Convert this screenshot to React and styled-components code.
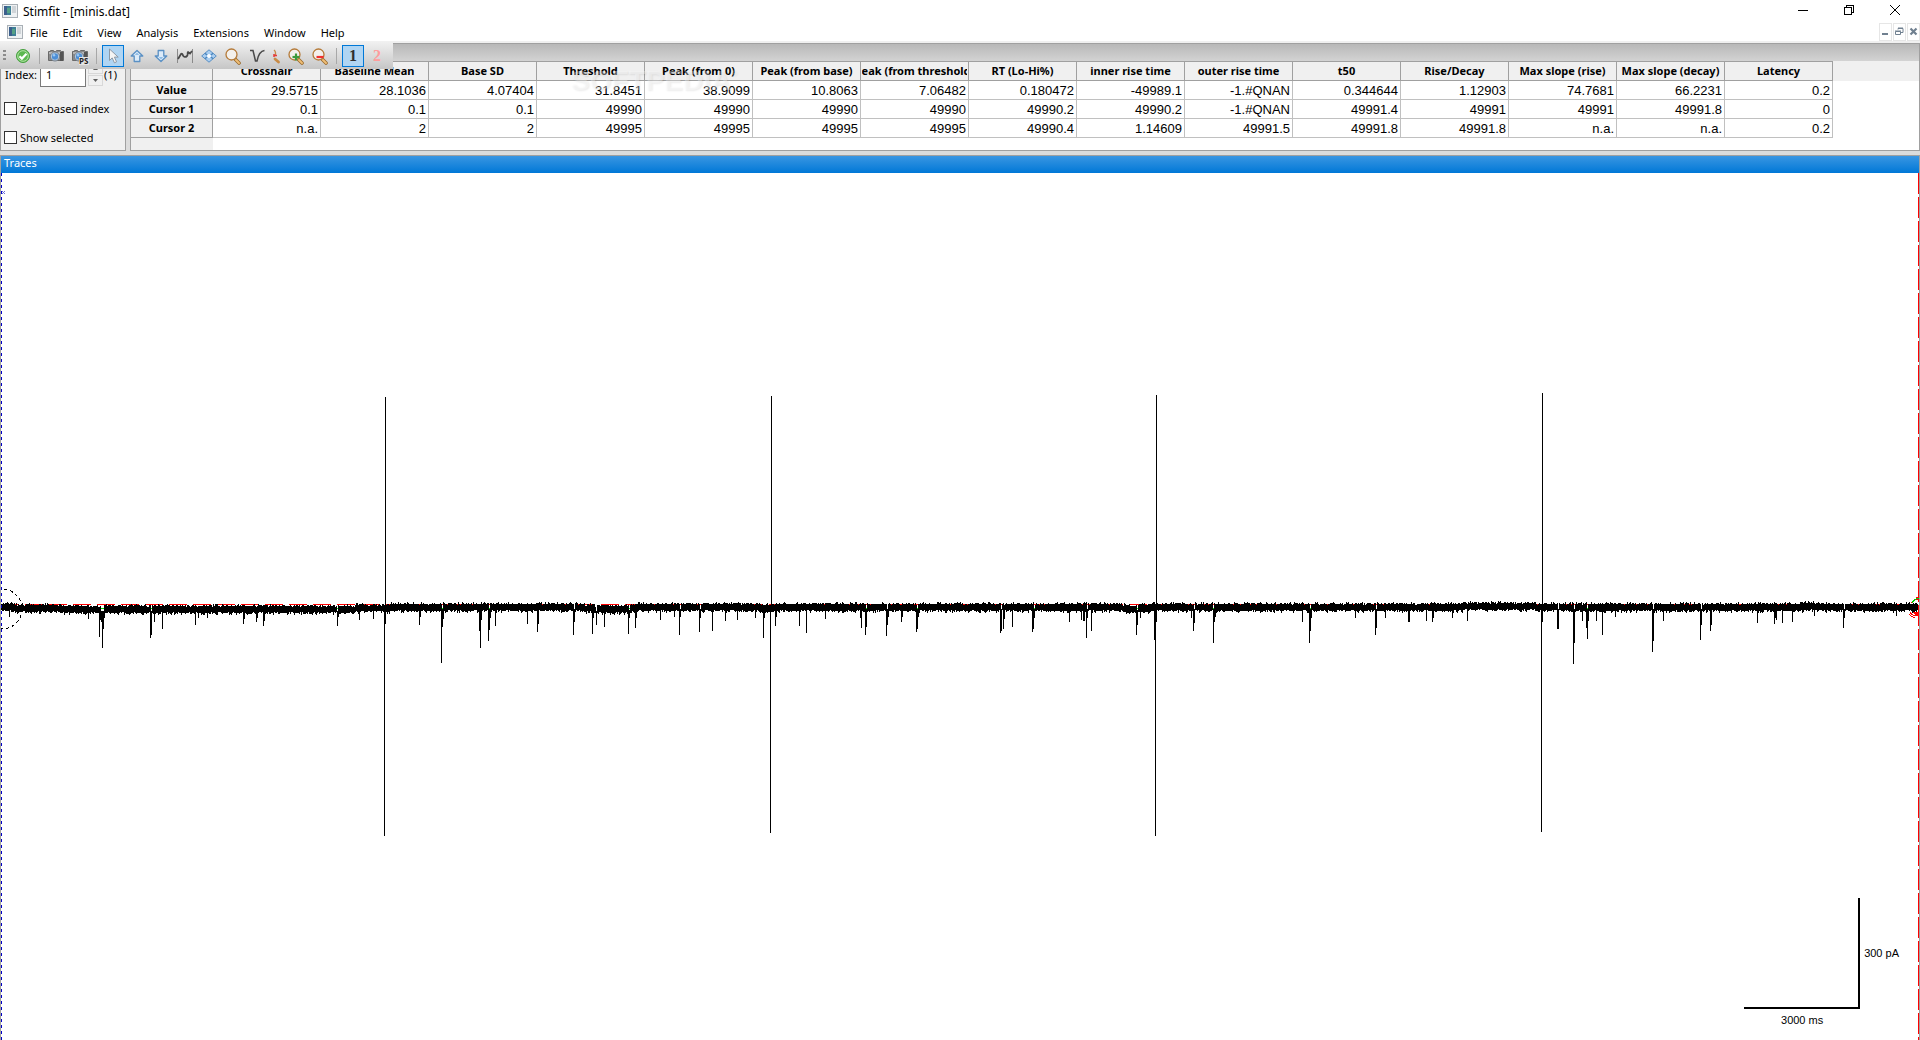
import styled, { createGlobalStyle } from 'styled-components';

const columns = [
    { title: 'Crosshair', values: ['29.5715', '0.1', 'n.a.'] },
    { title: 'Baseline Mean', values: ['28.1036', '0.1', '2'] },
    { title: 'Base SD', values: ['4.07404', '0.1', '2'] },
    { title: 'Threshold', values: ['31.8451', '49990', '49995'] },
    { title: 'Peak (from 0)', values: ['38.9099', '49990', '49995'] },
    { title: 'Peak (from base)', values: ['10.8063', '49990', '49995'] },
    { title: 'Peak (from threshold)', values: ['7.06482', '49990', '49995'] },
    { title: 'RT (Lo-Hi%)', values: ['0.180472', '49990.2', '49990.4'] },
    { title: 'inner rise time', values: ['-49989.1', '49990.2', '1.14609'] },
    { title: 'outer rise time', values: ['-1.#QNAN', '-1.#QNAN', '49991.5'] },
    { title: 't50', values: ['0.344644', '49991.4', '49991.8'] },
    { title: 'Rise/Decay', values: ['1.12903', '49991', '49991.8'] },
    { title: 'Max slope (rise)', values: ['74.7681', '49991', 'n.a.'] },
    { title: 'Max slope (decay)', values: ['66.2231', '49991.8', 'n.a.'] },
    { title: 'Latency', values: ['0.2', '0', '0.2'] },
];
const rowNames = ['Value', 'Cursor 1', 'Cursor 2'];
const menus = ['File', 'Edit', 'View', 'Analysis', 'Extensions', 'Window', 'Help'];

// upper edge of the noise band along the recording
const baseline = [
    [0, 604], [30, 605], [90, 606], [330, 606], [380, 605], [400, 604], [500, 604],
    [580, 604], [600, 606], [625, 606], [640, 604], [755, 604], [765, 605], [775, 604],
    [1120, 604], [1128, 606], [1145, 605], [1158, 604], [1450, 604], [1475, 603],
    [1525, 603], [1545, 604], [1795, 604], [1810, 603], [1830, 604], [1920, 604],
];

// downward events: [x, lowest point]
const events = [
    [9, 617], [88, 619], [99, 637], [100, 620], [101, 622], [102, 648], [103, 629], [104, 618],
    [150, 638], [151, 635], [154, 622], [162, 629], [195, 625], [198, 618], [207, 618],
    [243, 624], [244, 619], [256, 622], [257, 618], [263, 626], [264, 621], [337, 626],
    [338, 617], [359, 620], [373, 619], [385, 624], [419, 625], [420, 617], [441, 663],
    [442, 627], [443, 619], [479, 631], [480, 648], [481, 620], [488, 641], [489, 630],
    [490, 618], [495, 626], [527, 624], [537, 632], [538, 624], [573, 635], [574, 622],
    [592, 634], [593, 618], [596, 625], [604, 627], [628, 634], [629, 618], [635, 628],
    [636, 618], [660, 620], [674, 617], [679, 635], [680, 617], [699, 632], [700, 618],
    [712, 631], [725, 621], [737, 620], [755, 618], [763, 638], [764, 618], [775, 626],
    [776, 617], [799, 626], [806, 633], [825, 619], [860, 618], [861, 628], [865, 635],
    [866, 627], [886, 636], [887, 625], [888, 617], [901, 622], [902, 617], [916, 632],
    [917, 629], [918, 617], [1000, 633], [1001, 631], [1003, 629], [1004, 619], [1012, 627],
    [1032, 632], [1033, 629], [1034, 618], [1069, 622], [1081, 620], [1083, 621], [1084, 621],
    [1086, 638], [1087, 618], [1091, 631], [1136, 635], [1137, 625], [1140, 618], [1154, 640],
    [1156, 622], [1191, 618], [1193, 631], [1194, 623], [1213, 643], [1214, 622], [1215, 617],
    [1302, 622], [1309, 643], [1310, 631], [1311, 618], [1355, 618], [1375, 635], [1376, 628],
    [1385, 618], [1408, 622], [1409, 622], [1426, 621], [1432, 622], [1433, 618], [1452, 618],
    [1467, 621], [1542, 622], [1557, 629], [1558, 629], [1573, 664], [1574, 643], [1582, 621],
    [1586, 628], [1587, 639], [1588, 621], [1596, 621], [1602, 635], [1615, 617], [1652, 652],
    [1653, 641], [1663, 621], [1700, 640], [1701, 625], [1710, 631], [1711, 625], [1757, 623],
    [1774, 624], [1775, 618], [1776, 620], [1782, 623], [1792, 622], [1814, 616], [1843, 628],
    [1844, 618], [1896, 616],
];

// gaps in the upper edge right after the larger events
const notches = [
    101, 102, 103, 151, 337, 442, 489, 574, 596, 629, 680, 700, 866, 887, 917, 1001, 1034,
    1087, 1137, 1194, 1213, 1310, 1376, 1558, 1574, 1587, 1653, 1701, 1844,
];

const artifacts = [
    { x: 384, top: 397, bottom: 836 },
    { x: 770, top: 396, bottom: 833 },
    { x: 1155, top: 395, bottom: 836 },
    { x: 1541, top: 393, bottom: 832 },
];

const levelAt = (x) => {
    const i = baseline.findIndex(([px]) => px > x);
    if (i < 1) return baseline[baseline.length - 1][1];
    const [x0, y0] = baseline[i - 1];
    const [x1, y1] = baseline[i];
    return y0 + ((y1 - y0) * (x - x0)) / (x1 - x0);
};

const buildTrace = () => {
    let seed = 4711;
    const random = () => {
        seed = (seed * 1103515245 + 12345) % 2147483648;
        return seed / 2147483648;
    };
    const lows = new Map(events);
    let path = '';
    for (let x = 1; x < 1918; x += 1) {
        const level = Math.round(levelAt(x));
        const up = random();
        const down = random();
        let top = level + (up < 0.08 ? -2 : up < 0.45 ? -1 : up < 0.93 ? 0 : 1);
        let bottom = level + 7 + (down < 0.2 ? -1 : down < 0.7 ? 0 : down < 0.93 ? 1 : 2);
        if (notches.includes(x)) top = level + 5;
        if (lows.has(x)) bottom = lows.get(x);
        path += `M${x + 0.5} ${top}V${bottom}`;
    }
    return path;
};
const tracePath = buildTrace();

const AppIcon = () => (
    <svg width="16" height="14" viewBox="0 0 16 14" shapeRendering="crispEdges">
        <rect x="0" y="0" width="16" height="14" fill="#a9b0b6" />
        <rect x="1" y="1" width="14" height="12" fill="#eef1f3" />
        <rect x="2" y="2" width="7" height="9" fill="#3d7f96" />
        <rect x="2" y="2" width="3" height="9" fill="#3c5f8c" />
        <rect x="5" y="4" width="3" height="5" fill="#55a186" />
        <rect x="10" y="2" width="4" height="7" fill="#cfd4d8" />
    </svg>
);

const CheckIcon = () => (
    <svg width="16" height="16" viewBox="0 0 16 16">
        <circle cx="8" cy="8" r="6.5" fill="#5cb850" stroke="#46a03f" />
        <circle cx="8" cy="8" r="5.3" fill="none" stroke="#b4e2a8" />
        <path d="M4.5 8.200l2.400 2.400 4.600-4.800" fill="none" stroke="#fff" strokeWidth="2.200" />
    </svg>
);

const CameraIcon = ({ ps }) => (
    <svg width="18" height="18" viewBox="0 0 18 18">
        <path d="M1.5 4.5h2v-1h3v1h2l1-1h4l1 1h2v9h-15z" fill="#8b8b8b" stroke="#6a6a6a" />
        <path d="M2 5h14v2H2z" fill="#b5b5b5" />
        <path d="M13 5h3v9h-3z" fill="#555" />
        <circle cx="8" cy="9.5" r="4.5" fill="#c7d5e4" stroke="#6f7b88" />
        <circle cx="8" cy="9.5" r="3.2" fill="#4d8fd6" />
        <circle cx="7" cy="8.3" r="1.2" fill="#9cc8f2" />
        {ps && (
            <g>
                <rect x="8" y="10" width="10" height="8" fill="#e4e4e4" />
                <text x="8" y="17" fontSize="8" fontWeight="700" fontFamily="'Noto Sans', sans-serif" fill="#222">
                    PS
                </text>
            </g>
        )}
    </svg>
);

const PointerIcon = () => (
    <svg width="16" height="18" viewBox="0 0 16 18">
        <path
            d="M4.5 2v11.5l2.7-2.6 2.2 4.9 2.2-1-2.2-4.700h3.8z"
            fill="#f4f4f4"
            stroke="#8d99a6"
            strokeLinejoin="round"
        />
    </svg>
);

const ArrowIcon = ({ down }) => (
    <svg width="16" height="16" viewBox="0 0 16 16">
        <path
            d={
                down
                    ? 'M8 13.500L2.200 8h3V2.500h5.600V8h3z'
                    : 'M8 2.500L2.200 8h3v5.500h5.600V8h3z'
            }
            fill="#dcebf9"
            stroke="#5a90c4"
            strokeWidth="1.300"
            strokeLinejoin="round"
        />
        <path d={down ? 'M8 11.500L5.800 9h4.400z' : 'M8 4.500L5.800 7h4.400z'} fill="#8fbde6" />
    </svg>
);

const CurveIcon = () => (
    <svg width="18" height="16" viewBox="0 0 18 16" fill="none" stroke="#4a4a4a">
        <path d="M1.500 1v14M16.500 1v14" stroke="#8a8a8a" />
        <path d="M2 11l3-5c1-1 1.500 0 2 1.500s2.500 2 4 .5 0-3.500 1-4l2 1.500 2-2.500" strokeWidth="1.800" />
    </svg>
);

const FitIcon = () => (
    <svg width="16" height="14" viewBox="0 0 16 14">
        <path d="M8 .8L15.300 7 8 13.200.7 7z" fill="#a9cdf0" stroke="#5a90c4" />
        <path d="M4 4.200l2 1.800M12 4.200L10 6M4 9.800L6 8M12 9.800L10 8" stroke="#4c86bd" strokeWidth="1.400" />
        <path d="M6 7h4M8 5v4" stroke="#fff" strokeWidth="1.600" />
    </svg>
);

const ZoomIcon = ({ sign }) => (
    <svg width="18" height="18" viewBox="0 0 18 18">
        <path d="M11.500 12.500l3.500 3.500" stroke="#9a6a2c" strokeWidth="3.600" strokeLinecap="round" />
        <path d="M12 13l3 3" stroke="#efbe77" strokeWidth="2" strokeLinecap="round" />
        <circle cx="7.500" cy="7.500" r="5.500" fill="#f3f0ec" stroke="#b57a38" strokeWidth="1.300" />
        {sign && <path d="M5.500 10h7" stroke={sign === '+' ? '#3c9a3c' : '#f03030'} strokeWidth="2.200" />}
        {sign === '+' && <path d="M9 6.500v7" stroke="#3c9a3c" strokeWidth="2.200" />}
    </svg>
);

const ValleyIcon = () => (
    <svg width="16" height="16" viewBox="0 0 16 16" fill="none" stroke="#4a4a4a">
        <path d="M1 2.500h3l2.500 10.500h1.500C9 8 10.500 3 15.500 2.500" strokeWidth="1.500" />
    </svg>
);

const HalfZoomIcon = () => (
    <svg width="8" height="16" viewBox="0 0 8 16" fill="none">
        <path d="M1 2q2.500 2 1 6" stroke="#c88b4a" strokeWidth="1.300" />
        <path d="M1 7.500h3M1 6v3" stroke="#e53a3a" strokeWidth="1.500" />
        <path d="M2 11l3.500 3" stroke="#c98b45" strokeWidth="2.800" strokeLinecap="round" />
    </svg>
);

const tools = [
    { name: 'Apply', icon: <CheckIcon /> },
    { gap: true },
    { name: 'Snapshot', icon: <CameraIcon /> },
    { name: 'Snapshot as PS', icon: <CameraIcon ps /> },
    { gap: true },
    { name: 'Select', icon: <PointerIcon />, active: true },
    { name: 'Previous', icon: <ArrowIcon /> },
    { name: 'Next', icon: <ArrowIcon down /> },
    { name: 'Fit trace', icon: <CurveIcon /> },
    { name: 'Move', icon: <FitIcon /> },
    { name: 'Zoom', icon: <ZoomIcon /> },
    { name: 'Event', icon: <ValleyIcon /> },
    { name: 'Partial zoom', icon: <HalfZoomIcon />, narrow: true },
    { name: 'Zoom in', icon: <ZoomIcon sign="+" /> },
    { name: 'Zoom out', icon: <ZoomIcon sign="-" /> },
    { gap: true },
    { name: 'Channel 1', digit: '1', active: true },
    { name: 'Channel 2', digit: '2' },
];

const TracePlot = () => (
    <Plot viewBox="1 173 1918 867" preserveAspectRatio="none" shapeRendering="crispEdges">
        <path d="M1 604.5H1918" stroke="#ff0000" strokeDasharray="18 6" />
        <path
            d="M100 608.5h4M151 608.5h1M337 608.5h1M442 608.5h1M489 608.5h1M629 608.5h1M866 608.5h1M917 608.5h1M1034 608.5h1M1137 608.5h1M1213 608.5h1M1310 608.5h1M1587 608.5h1"
            stroke="#00e000"
        />
        <path d={tracePath} stroke="#000" />
        {artifacts.map(({ x, top, bottom }) => (
            <path key={x} d={`M${x + 1.5} ${top}V612M${x + 0.5} 606V${bottom}`} stroke="#000" />
        ))}
        <path d="M1.5 173V1040" stroke="#0000c8" strokeDasharray="3 3" />
        <circle cx="2" cy="609" r="20" fill="none" stroke="#000" strokeDasharray="3 3" />
        <path d="M2 191l3 3M5 191l-3 3" stroke="#6a6ad8" />
        <path d="M1918.5 173V1040" stroke="#ff0000" strokeDasharray="21 3" />
        <path d="M1911 603q3-4 8-4M1910 612q2 4 8 4M1909 614q3 4 6 3M1916 597h3" fill="none" stroke="#ff0000" />
        <path d="M1913 612h6v3h-4z" fill="#ff0000" />
        <path d="M1912 603q3-5 7-5" fill="none" stroke="#00d000" />
    </Plot>
);

const App = () => {
    return (
        <Window>
            <GlobalStyle />
            <TitleBar>
                <AppIcon />
                <Title>Stimfit - [minis.dat]</Title>
                <WindowButton aria-label="Minimize">
                    <svg width="10" height="10" viewBox="0 0 10 10" shapeRendering="crispEdges">
                        <path d="M0 5.500h10" stroke="#000" />
                    </svg>
                </WindowButton>
                <WindowButton aria-label="Restore">
                    <svg width="10" height="10" viewBox="0 0 10 10" fill="none" stroke="#000" shapeRendering="crispEdges">
                        <path d="M.5 2.500h7v7h-7zM2.500 2.500v-2h7v7h-2" />
                    </svg>
                </WindowButton>
                <WindowButton aria-label="Close">
                    <svg width="10" height="10" viewBox="0 0 10 10" stroke="#000">
                        <path d="M0 0l10 10M10 0L0 10" />
                    </svg>
                </WindowButton>
            </TitleBar>
            <MenuBar>
                <AppIcon />
                <MenuList>
                    {menus.map((menu) => (
                        <MenuButton key={menu}>{menu}</MenuButton>
                    ))}
                </MenuList>
                <ChildButton aria-label="Minimize document">
                    <svg width="9" height="9" viewBox="0 0 9 9">
                        <path d="M1 7h6" stroke="#708090" strokeWidth="2" />
                    </svg>
                </ChildButton>
                <ChildButton aria-label="Restore document">
                    <svg width="9" height="9" viewBox="0 0 9 9" fill="none" stroke="#708090">
                        <path d="M.5 4.500h5v3h-5zM0 4h6M3 2.500v-1h5v4H6M3 1h5" />
                    </svg>
                </ChildButton>
                <ChildButton aria-label="Close document">
                    <svg width="9" height="9" viewBox="0 0 9 9">
                        <path d="M1.500 1.500l6 6M7.500 1.500l-6 6" stroke="#708090" strokeWidth="2.200" />
                    </svg>
                </ChildButton>
            </MenuBar>
            <Workspace>
                <Toolbar>
                    <Grip />
                    {tools.map((tool, i) =>
                        tool.gap ? (
                            <Separator key={i} />
                        ) : (
                            <ToolButton key={i} aria-label={tool.name} $active={tool.active} $narrow={tool.narrow}>
                                {tool.icon || <Digit $faded={!tool.active}>{tool.digit}</Digit>}
                            </ToolButton>
                        ),
                    )}
                </Toolbar>
                <Panels>
                    <TracePanel>
                        <PanelCaption />
                        <IndexRow>
                            <label htmlFor="trace-index">Index:</label>
                            <IndexInput id="trace-index" defaultValue="1" />
                            <Spinner>
                                <SpinButton aria-label="Increase">
                                    <svg width="5" height="3" viewBox="0 0 5 3">
                                        <path d="M0 3l2.500-3L5 3z" fill="#606060" />
                                    </svg>
                                </SpinButton>
                                <SpinButton aria-label="Decrease">
                                    <svg width="5" height="3" viewBox="0 0 5 3">
                                        <path d="M0 0l2.500 3L5 0z" fill="#606060" />
                                    </svg>
                                </SpinButton>
                            </Spinner>
                            <span>(1)</span>
                        </IndexRow>
                        <CheckLabel>
                            <CheckBox type="checkbox" />
                            Zero-based index
                        </CheckLabel>
                        <CheckLabel>
                            <CheckBox type="checkbox" />
                            Show selected
                        </CheckLabel>
                    </TracePanel>
                    <ResultPanel>
                        <PanelCaption />
                        <Grid>
                            <ResultTable>
                                <colgroup>
                                    <NameCol />
                                    {columns.map(({ title }) => (
                                        <ValueCol key={title} />
                                    ))}
                                </colgroup>
                                <thead>
                                    <tr>
                                        <HeadCell />
                                        {columns.map(({ title }) => (
                                            <HeadCell key={title} scope="col">
                                                <HeadText>{title}</HeadText>
                                            </HeadCell>
                                        ))}
                                    </tr>
                                </thead>
                                <tbody>
                                    {rowNames.map((name, row) => (
                                        <tr key={name}>
                                            <HeadCell scope="row">{name}</HeadCell>
                                            {columns.map(({ title, values }) => (
                                                <ValueCell key={title}>{values[row]}</ValueCell>
                                            ))}
                                        </tr>
                                    ))}
                                </tbody>
                            </ResultTable>
                        </Grid>
                        <Watermark>
                            SOFTPEDIA<sup>®</sup>
                        </Watermark>
                    </ResultPanel>
                </Panels>
                <TracesWindow>
                    <TracesCaption>Traces</TracesCaption>
                    <PlotArea>
                        <TracePlot />
                        <ScaleBar>
                            <ScaleCorner />
                            <span>300 pA</span>
                            <TimeLabel>3000 ms</TimeLabel>
                        </ScaleBar>
                    </PlotArea>
                </TracesWindow>
            </Workspace>
        </Window>
    );
};

export default App;

const GlobalStyle = createGlobalStyle`
    * {
        box-sizing: border-box;
    }

    body {
        margin: 0;
        background: #fff;
        color: #000;
        font-family: 'Noto Sans', 'Open Sans', sans-serif;
        font-size: 12px;
    }

    button,
    input {
        font: inherit;
        color: inherit;
    }

    svg {
        flex: none;
    }
`;

const Window = styled.div`
    display: flex;
    flex-direction: column;
    height: 100vh;
    overflow: hidden;
`;

const TitleBar = styled.header`
    display: flex;
    align-items: center;
    height: 22px;
    padding: 0 2px;
`;

const Title = styled.div`
    flex: 1;
    padding-left: 5px;
    font-size: 12px;
`;

const WindowButton = styled.button`
    display: flex;
    align-items: center;
    align-self: flex-start;
    justify-content: center;
    width: 46px;
    height: 20px;
    padding: 0;
    border: none;
    background: none;
`;

const MenuBar = styled.nav`
    display: flex;
    align-items: center;
    height: 19px;
    padding-left: 7px;
`;

const MenuList = styled.div`
    display: flex;
    flex: 1;
    gap: 15px;
    padding: 2px 0 0 7px;
`;

const MenuButton = styled.button`
    padding: 0;
    border: none;
    background: none;
    font-size: 11px;
    line-height: 19px;
`;

const ChildButton = styled.button`
    display: flex;
    align-items: center;
    justify-content: center;
    width: 13px;
    height: 18px;
    margin-left: 1px;
    padding: 0;
    border: 1px solid #e6e6e6;
    background: #fff;
`;

const Workspace = styled.main`
    position: relative;
    display: flex;
    flex: 1;
    flex-direction: column;
    min-height: 0;
    padding-top: 2px;
    background: linear-gradient(#f0f0f0 2px, #dcdcdc 2px);
`;

/* floats over the docked panels */
const Toolbar = styled.div`
    position: absolute;
    top: 0;
    left: 0;
    z-index: 1;
    display: flex;
    align-items: center;
    height: 28px;
    padding: 2px 4px 0 0;
    background: linear-gradient(#f2f2f2, #c6c6c6);
`;

const Grip = styled.div`
    width: 3px;
    height: 12px;
    margin: 0 5px 0 3px;
    background: repeating-linear-gradient(#8c8c8c 0 2px, transparent 2px 4px);
`;

const ToolButton = styled.button`
    display: flex;
    align-items: center;
    justify-content: center;
    width: ${({ $narrow }) => ($narrow ? 13 : 22)}px;
    height: 22px;
    margin: 0 1px;
    padding: 0;
    border: 1px solid ${({ $active }) => ($active ? '#0078d7' : 'transparent')};
    background: ${({ $active }) => ($active ? '#b0d5f3' : 'none')};
`;

const Separator = styled.div`
    width: 1px;
    height: 16px;
    margin: 0 4px;
    background: #a8a8a8;
`;

const Digit = styled.span`
    font-family: 'Liberation Serif', serif;
    font-size: 16px;
    font-weight: 700;
    color: ${({ $faded }) => ($faded ? '#ff9c9c' : '#303030')};
`;

const Panels = styled.section`
    display: flex;
    gap: 4px;
    height: 108px;
`;

const TracePanel = styled.div`
    width: 126px;
    border: 1px solid #a0a0a0;
    background: #f0f0f0;
    font-size: 11px;
`;

const PanelCaption = styled.div`
    height: 17px;
    background: linear-gradient(#b8b8b8, #d3d3d3);
`;

const IndexRow = styled.div`
    display: flex;
    align-items: center;
    height: 27px;
    padding-left: 4px;
`;

const IndexInput = styled.input`
    width: 46px;
    height: 24px;
    margin: 0 2px 0 3px;
    padding: 0 5px;
    border: 1px solid #7a7a7a;
    background: #fff;
`;

const Spinner = styled.div`
    display: flex;
    flex-direction: column;
    gap: 1px;
    margin-right: 1px;
`;

const SpinButton = styled.button`
    display: flex;
    align-items: center;
    justify-content: center;
    width: 15px;
    height: 11px;
    padding: 0;
    border: 1px solid #d8d8d8;
    background: #f0f0f0;
`;

const CheckLabel = styled.label`
    display: flex;
    align-items: center;
    gap: 3px;
    height: 17px;
    margin: 12px 0 0 3px;
    white-space: nowrap;
`;

const CheckBox = styled.input`
    appearance: none;
    flex: none;
    width: 13px;
    height: 13px;
    margin: 0;
    border: 1px solid #333;
    background: #fff;
`;

const ResultPanel = styled.div`
    position: relative;
    flex: 1;
    min-width: 0;
    border: 1px solid #a0a0a0;
    background: #fff;
`;

const Grid = styled.div`
    height: 89px;
    overflow: hidden;
    background:
        linear-gradient(#f0f0f0, #f0f0f0) 0 0 / 100% 20px no-repeat,
        linear-gradient(#f0f0f0, #f0f0f0) 0 0 / 82px 100% no-repeat;
`;

const ResultTable = styled.table`
    width: 1702px;
    border-spacing: 0;
    table-layout: fixed;
`;

const NameCol = styled.col`
    width: 82px;
`;

const ValueCol = styled.col`
    width: 108px;
`;

const HeadCell = styled.th`
    height: 19px;
    padding: 0 1px;
    overflow: hidden;
    border-right: 1px solid #a0a0a0;
    border-bottom: 1px solid #a0a0a0;
    background: #f0f0f0;
    font-size: 11px;
    line-height: 18px;
    white-space: nowrap;

    thead & {
        height: 20px;
        border-top: 1px solid #a0a0a0;
    }
`;

const HeadText = styled.div`
    display: flex;
    justify-content: center;
    overflow: hidden;
`;

const ValueCell = styled.td`
    height: 19px;
    padding: 1px 2px 0 0;
    border-right: 1px solid #c0c0c0;
    border-bottom: 1px solid #c0c0c0;
    background: #fff;
    font-family: 'Liberation Sans', Arial, sans-serif;
    font-size: 13px;
    line-height: 17px;
    text-align: right;
`;

const Watermark = styled.div`
    position: absolute;
    top: 14px;
    left: 440px;
    font-family: 'Liberation Sans', Arial, sans-serif;
    font-size: 28px;
    font-weight: 700;
    line-height: 32px;
    color: rgba(255, 255, 255, 0.35);
    text-shadow: 1px 1px 2px rgba(0, 0, 0, 0.08);
    pointer-events: none;

    sup {
        font-size: 8px;
        vertical-align: 14px;
    }
`;

const TracesWindow = styled.section`
    display: flex;
    flex: 1;
    flex-direction: column;
    min-height: 0;
    margin-top: 4px;
    border: 1px solid #a0a0a0;
    border-bottom: none;
`;

const TracesCaption = styled.div`
    height: 17px;
    padding-left: 3px;
    background: linear-gradient(#3a96e2, #0078d7);
    color: #fff;
    font-size: 11px;
    line-height: 14px;
`;

const PlotArea = styled.div`
    position: relative;
    flex: 1;
    min-height: 0;
    background: #fff;
`;

const Plot = styled.svg`
    display: block;
    width: 100%;
    height: 100%;
`;

/* calibration bar drawn over the plot */
const ScaleBar = styled.div`
    position: absolute;
    right: 20px;
    bottom: 12px;
    display: grid;
    grid-template-columns: 116px auto;
    column-gap: 4px;
    row-gap: 4px;
    align-items: center;
    font-family: 'Liberation Sans', Arial, sans-serif;
    font-size: 11px;
    line-height: 15px;
`;

const ScaleCorner = styled.div`
    height: 111px;
    border-right: 2px solid #000;
    border-bottom: 2px solid #000;
`;

const TimeLabel = styled.span`
    text-align: center;
`;
